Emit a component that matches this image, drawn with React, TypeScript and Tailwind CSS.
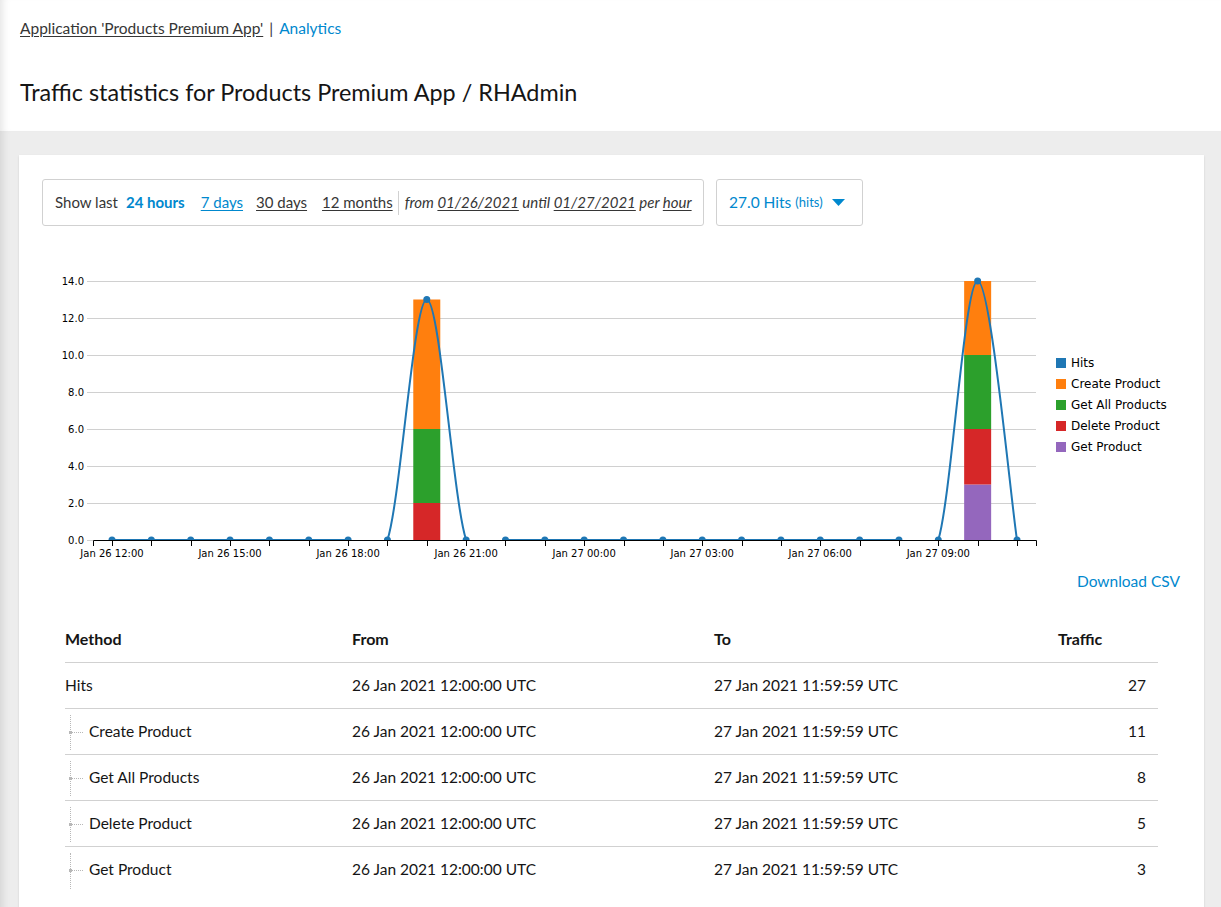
import React from 'react';

const X0 = 112;
const STEP = (1017 - 112) / 23;
const Y0 = 540;
const UNIT = 18.5;

const xs = Array.from({ length: 24 }, (_, i) => X0 + i * STEP);
const hits = xs.map((_, i) => (i === 8 ? 13 : i === 22 ? 14 : 0));
const y = (v: number) => Y0 - v * UNIT;

const labels: [number, string][] = [
  [0, 'Jan 26 12:00'],
  [3, 'Jan 26 15:00'],
  [6, 'Jan 26 18:00'],
  [9, 'Jan 26 21:00'],
  [12, 'Jan 27 00:00'],
  [15, 'Jan 27 03:00'],
  [18, 'Jan 27 06:00'],
  [21, 'Jan 27 09:00'],
];

const bars = [
  { i: 8, parts: [['#d62728', 0, 2], ['#2ca02c', 2, 6], ['#ff7f0e', 6, 13]] },
  { i: 22, parts: [['#9467bd', 0, 3], ['#d62728', 3, 6], ['#2ca02c', 6, 10], ['#ff7f0e', 10, 14]] },
] as const;

const legend = [
  ['#1f77b4', 'Hits'],
  ['#ff7f0e', 'Create Product'],
  ['#2ca02c', 'Get All Products'],
  ['#d62728', 'Delete Product'],
  ['#9467bd', 'Get Product'],
];

// cardinal spline through the points, like c3's "spline" type
function splinePath() {
  const pts = xs.map((x, i) => [x, y(hits[i])]);
  let d = `M${pts[0][0]},${pts[0][1]}`;
  for (let i = 0; i < pts.length - 1; i++) {
    const p0 = pts[i - 1] || pts[i];
    const p1 = pts[i];
    const p2 = pts[i + 1];
    const p3 = pts[i + 2] || p2;
    const c1x = p1[0] + (p2[0] - p0[0]) / 6;
    const c1y = p1[1] + (p2[1] - p0[1]) / 6;
    const c2x = p2[0] - (p3[0] - p1[0]) / 6;
    const c2y = p2[1] - (p3[1] - p1[1]) / 6;
    d += ` C${c1x},${c1y} ${c2x},${c2y} ${p2[0]},${p2[1]}`;
  }
  return d;
}

function Chart() {
  return (
    <svg width={1162} height={345} className="block" style={{ fontFamily: '"DejaVu Sans", sans-serif' }}>
      <defs>
        <clipPath id="area">
          <rect x={93} y={260} width={944} height={280} />
        </clipPath>
      </defs>
      <g transform="translate(-42,-226)">
        {[0, 2, 4, 6, 8, 10, 12, 14].map((v) => (
          <g key={v}>
            {v > 0 && <line x1={87} x2={1036} y1={y(v) + 0.5} y2={y(v) + 0.5} stroke="#d0d0d0" />}
            <text x={84} y={y(v) + 3.5} fontSize={10} textAnchor="end" fill="#000">
              {v.toFixed(1)}
            </text>
          </g>
        ))}
        {bars.map((b) =>
          b.parts.map(([c, a, z]) => (
            <rect key={`${b.i}-${a}`} x={xs[b.i] - 13.5} y={y(z)} width={27} height={(z - a) * UNIT} fill={c} />
          ))
        )}
        <line x1={87} x2={93} y1={540.5} y2={540.5} stroke="#d0d0d0" />
        <path d="M93.5,546V540.5H1036.5V546" fill="none" stroke="#000" />
        {xs.map((x, i) => (
          <line key={i} x1={Math.round(x) + 0.5} x2={Math.round(x) + 0.5} y1={540} y2={546} stroke="#000" />
        ))}
        {labels.map(([i, t]) => (
          <text key={t} x={xs[i]} y={557} fontSize={10} textAnchor="middle" fill="#000">
            {t}
          </text>
        ))}
        <g clipPath="url(#area)">
          <path d={splinePath()} fill="none" stroke="#1f77b4" strokeWidth={2} />
          {xs.map((x, i) => (
            <circle key={i} cx={x} cy={y(hits[i])} r={3.5} fill="#1f77b4" />
          ))}
        </g>
        {legend.map(([c, t], k) => (
          <g key={t}>
            <rect x={1056} y={358 + k * 21} width={10} height={10} fill={c} />
            <text x={1071} y={367 + k * 21} fontSize={12} fill="#000">
              {t}
            </text>
          </g>
        ))}
      </g>
    </svg>
  );
}

const rows = [
  { name: 'Hits', value: 27, child: false },
  { name: 'Create Product', value: 11, child: true },
  { name: 'Get All Products', value: 8, child: true },
  { name: 'Delete Product', value: 5, child: true },
  { name: 'Get Product', value: 3, child: true },
];

export default function App() {
  return (
    <div className="min-h-screen bg-[#ededed] text-[#151515]" style={{ fontFamily: 'Lato, "Liberation Sans", sans-serif' }}>
      <div className="bg-white h-[131px] pl-[20px] pt-[18px] shadow-[inset_9px_0_8px_-7px_rgba(0,0,0,0.12)]">
        <div className="text-[15.5px] leading-[20px] text-[#363636]">
          <span className="underline underline-offset-2">Application 'Products Premium App'</span>
          <span className="mx-[6px]">|</span>
          <span className="text-[#0088ce]">Analytics</span>
        </div>
        <h1 className="mt-[38px] text-[23.4px] leading-[32px] text-[#151515]">Traffic statistics for Products Premium App / RHAdmin</h1>
      </div>

      <div className="pt-[24px] pl-[19px] pr-[17px] shadow-[inset_9px_0_8px_-7px_rgba(0,0,0,0.12)]">
        <div className="bg-white shadow-[0_1px_2px_rgba(0,0,0,0.12)] pt-[24px] pl-[23px] pr-[24px] pb-[24px]">
          <div className="flex gap-[12px] text-[15px] text-[#363636]">
            <div className="h-[47px] w-[662px] flex items-center border border-[#d1d1d1] rounded-[3px] pl-[12px]">
              <span>Show last</span>
              <span className="ml-[8px] font-bold text-[#0088ce]">24 hours</span>
              <span className="ml-[16px] underline underline-offset-2 text-[#0088ce]">7 days</span>
              <span className="ml-[13px] underline underline-offset-2">30 days</span>
              <span className="ml-[15px] underline underline-offset-2">12 months</span>
              <span className="ml-[5px] mr-[6px] h-[24px] w-px bg-[#d1d1d1]" />
              <span className="italic">
                from <span className="underline underline-offset-2">01/26/2021</span> until{' '}
                <span className="underline underline-offset-2">01/27/2021</span> per{' '}
                <span className="underline underline-offset-2">hour</span>
              </span>
            </div>
            <div className="h-[47px] w-[147px] flex items-center border border-[#d1d1d1] rounded-[3px] pl-[12px] text-[#0088ce]">
              <span className="text-[15.5px]">27.0 Hits</span>
              <span className="ml-[4px] text-[13px]">(hits)</span>
              <svg width="13" height="7" viewBox="0 0 13 7" className="ml-[9px]">
                <path d="M0 0H13L6.5 7Z" fill="#0088ce" />
              </svg>
            </div>
          </div>

          <Chart />

          <div className="flex justify-end text-[15.5px] leading-[20px] text-[#0088ce]">Download CSV</div>

          <div className="mt-[24px] mx-[23px] mr-[22px] text-[15.5px] text-[#151515]">
            <div className="grid grid-cols-[287px_362px_344px_1fr] h-[48px] items-center border-b border-[#d1d1d1] font-bold text-[16px]">
              <div>Method</div>
              <div>From</div>
              <div>To</div>
              <div>Traffic</div>
            </div>
            {rows.map((r, k) => (
              <div
                key={r.name}
                className={`grid grid-cols-[287px_362px_344px_1fr] h-[46px] items-center ${k < rows.length - 1 ? 'border-b border-[#d1d1d1]' : ''}`}
              >
                {r.child ? (
                  <div className="relative h-full flex items-center pl-[24px]">
                    <span className="absolute left-[5px] top-[6px] bottom-[4px] border-l border-dotted border-[#b8b8b8]" />
                    <span className="absolute left-[5px] top-1/2 w-[13px] border-t border-dotted border-[#b8b8b8]" />
                    <span className="absolute left-[4px] top-[calc(50%-1px)] w-[3px] h-[3px] bg-[#b8b8b8]" />
                    {r.name}
                  </div>
                ) : (
                  <div>{r.name}</div>
                )}
                <div>26 Jan 2021 12:00:00 UTC</div>
                <div>27 Jan 2021 11:59:59 UTC</div>
                <div className="text-right pr-[12px]">{r.value}</div>
              </div>
            ))}
          </div>
        </div>
      </div>
    </div>
  );
}
